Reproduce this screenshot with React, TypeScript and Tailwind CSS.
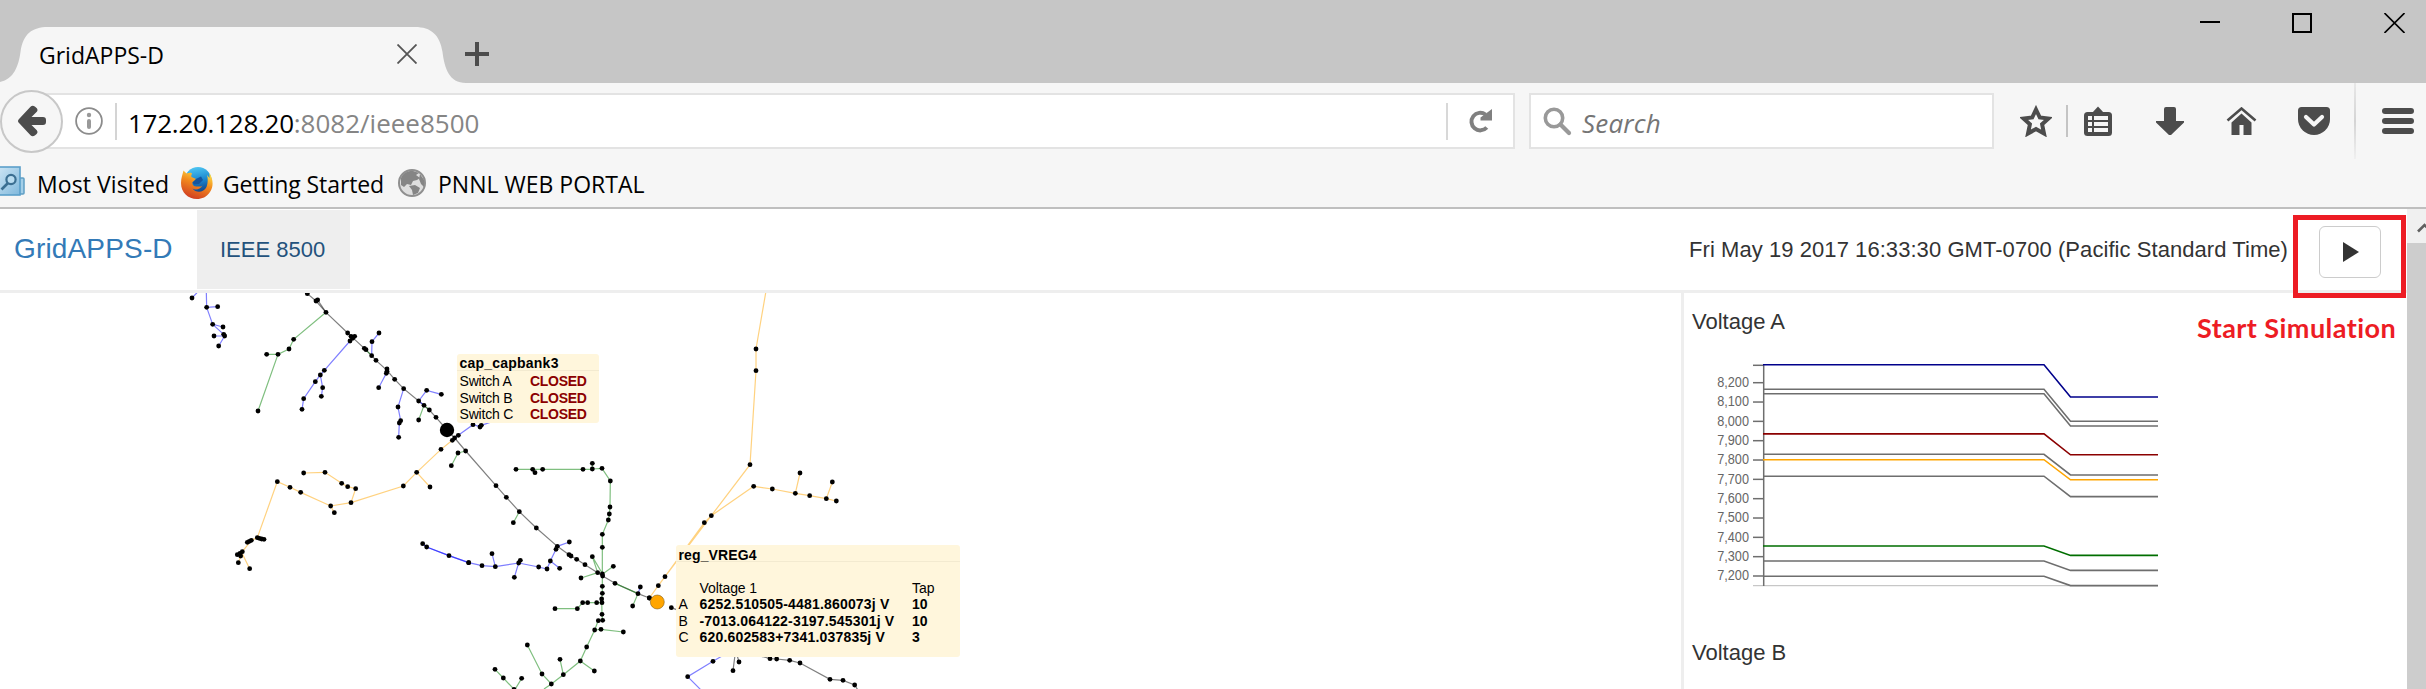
import React from "react";

type Dot = [number, number];
type Section = { ox: number; oy: number; lines: [string, string][]; dots: Dot[] };

const BLUE = "#0000ff";
const GREEN = "#008000";
const BLACK = "#000000";
const ORANGE = "#ffa500";

// Feeder geometry, in thirds of a pixel from each section's origin.
const sections: Section[] = [
  {
    ox: 180,
    oy: -8,
    lines: [
      [BLUE, "M52 22L36 39M79 22L80 67L113 65M80 67L98 118L129 126M98 118L131 148M134 153H102M134 153L116 183"],
      [BLACK, "M372 18L382 26L408 48L438 82L503 144L518 158L553 190L575 212L588 226L621 256L644 283L671 311L716 348L748 375L768 397L801 435L824 459L857 498L948 602"],
      [BLACK, "M413 45L438 82"],
      [GREEN, "M438 82L341 163L327 192L294 208L234 378M260 208H294L327 192M553 190L575 212M732 361L716 405M732 361L748 375M857 498L834 504L814 542"],
      [BLUE, "M510 168L433 256L421 270L406 290L371 341L366 373M421 270L428 308L424 334M597 144L576 170L575 212M619 265L596 308M671 311L654 366L662 407L658 414L656 457M716 348L740 316L784 328M716 348L740 316M716 348L732 361M824 459L835 451L879 419L900 425M904 421L945 407"],
      [ORANGE, "M817 466L783 493L710 562L670 603L513 653L452 663L362 622L330 607L292 590L232 758L214 766L202 772M710 562L750 606M371 564L435 562L485 595L503 605L527 611L513 653M452 663L463 683M208 774L187 800L175 833M187 806L209 851"],
      [BLUE, "M728 776L740 786L807 812L866 833"],
    ],
    dots: [
      [36, 39], [80, 67], [113, 65], [98, 118], [129, 126], [102, 153], [131, 148], [134, 153], [116, 183],
      [382, 26], [408, 48], [413, 45], [438, 82], [341, 163], [327, 192], [260, 208], [294, 208], [234, 378],
      [503, 144], [513, 154], [524, 154], [518, 160], [510, 168], [597, 144], [576, 170], [553, 190], [558, 194],
      [575, 212], [588, 226], [433, 256], [421, 270], [406, 290], [428, 308], [424, 334], [371, 341], [366, 373],
      [621, 252], [621, 259], [619, 265], [596, 308], [644, 283], [671, 311], [654, 366], [662, 407], [658, 414],
      [656, 457], [740, 316], [784, 328], [716, 348], [732, 361], [748, 375], [716, 405], [768, 397], [879, 419],
      [900, 426], [904, 421], [835, 451], [824, 459], [817, 466], [783, 493], [834, 504], [857, 498], [814, 542],
      [710, 562], [670, 603], [750, 606], [371, 564], [435, 562], [485, 595], [503, 605], [527, 611], [513, 653],
      [452, 663], [463, 683], [292, 590], [330, 607], [362, 622], [232, 758], [238, 760], [245, 762], [252, 763],
      [202, 772], [208, 769], [214, 766], [187, 800], [172, 809], [182, 813], [180, 805], [175, 833], [209, 851],
      [728, 776], [740, 786], [807, 812], [866, 833],
    ],
  },
  {
    ox: 420,
    oy: 147,
    lines: [
      [BLACK, "M228 137L259 172L298 215L349 264L412 319L447 344L470 358L495 374L533 398L548 408L585 430L654 461L688 474L712 486M754 503L775 511"],
      [GREEN, "M298 215L280 248M288 88H338L345 98M338 88H517V70M517 87L546 85L571 123L570 201L568 222L565 240L547 283V439L547 460L545 477L546 523M546 488H488L472 506H405M533 398L517 350M548 402L517 350M548 402L580 379M533 398L483 414M585 430L654 461L638 498M546 523L548 541H535L524 570L500 621L481 663L430 704L394 732L366 702L322 615M524 570L543 568L610 576M481 663L523 693M430 704L420 658M430 704L394 732L372 747M225 688L250 714L284 750L305 715"],
      [BLUE, "M8 311L20 321L87 347L146 368L186 377L226 380L216 341M226 380L296 369L301 361M296 369L283 412M296 369L356 381L381 387L391 363L408 328L412 319L448 306M391 363L419 385M661 441L654 461"],
    ],
    dots: [
      [228, 137], [259, 172], [298, 215], [280, 248], [349, 264], [412, 319], [408, 328], [448, 306], [447, 344],
      [453, 348], [470, 358], [495, 374], [533, 398], [547, 402], [548, 408], [517, 350], [580, 379], [483, 414],
      [585, 430], [654, 461], [661, 441], [638, 498], [688, 474], [754, 503], [288, 88], [338, 88], [345, 98],
      [368, 88], [489, 88], [517, 70], [517, 87], [546, 85], [571, 123], [570, 201], [568, 222], [565, 240],
      [547, 283], [547, 322], [146, 368], [186, 377], [226, 380], [216, 341], [296, 369], [301, 361], [283, 412],
      [356, 381], [381, 387], [391, 363], [419, 385], [547, 439], [547, 460], [545, 477], [546, 488], [530, 488],
      [503, 488], [488, 488], [472, 506], [405, 506], [546, 523], [548, 541], [535, 542], [524, 570], [543, 568],
      [610, 576], [500, 621], [481, 663], [523, 693], [430, 704], [420, 658], [394, 732], [366, 702], [322, 615],
      [225, 688], [250, 714], [305, 715], [282, 748],
    ],
  },
  {
    ox: 640,
    oy: -8,
    lines: [
      [ORANGE, "M378 18L348 192V257L330 539L214 692L193 713L75 875L55 902L28 939M341 604L214 692L75 875M341 604L397 612L466 625L509 632L559 641L589 648M466 625L480 564M559 641L577 591"],
      [BLUE, "M250 1111L219 1129L143 1175L182 1214"],
      [BLACK, "M285 1110L279 1157M291 1110L297 1131M350 1110L390 1121L410 1122L449 1126L480 1134L570 1183L609 1186L644 1200L653 1214"],
    ],
    dots: [
      [348, 192], [348, 257], [330, 539], [341, 604], [397, 612], [466, 625], [480, 564], [509, 632], [559, 641],
      [577, 591], [589, 648], [214, 692], [193, 713], [75, 875], [55, 902], [28, 939], [219, 1129], [143, 1175],
      [297, 1131], [279, 1157], [390, 1121], [410, 1122], [449, 1126], [480, 1134], [570, 1183], [609, 1186],
      [644, 1200],
    ],
  },
];

const series: [string, number, number][] = [
  ["#6e6e6e", 389.2, 421.3],
  ["#6e6e6e", 393.7, 426],
  ["#6e6e6e", 454.3, 475],
  ["#6e6e6e", 476.2, 496.6],
  ["#6e6e6e", 561, 570.4],
  ["#6e6e6e", 576.3, 585.6],
  ["#00008b", 364.8, 397],
  ["#8b0000", 433.9, 454.8],
  ["#ffa500", 459.7, 479.8],
  ["#006e00", 546, 555.4],
];

const ticks = ["8,200", "8,100", "8,000", "7,900", "7,800", "7,700", "7,600", "7,500", "7,400", "7,300", "7,200"];

function TitleBar() {
  return (
    <div className="flex h-[83px] justify-between bg-[#c6c6c6]">
      <div className="relative flex w-[500px] shrink-0 items-center pt-[27px]">
        <svg className="absolute left-0 top-0" width="470" height="83" viewBox="0 0 470 83">
          <path d="M0 82C14 79 18.5 66 20.5 52C23 34 32 27 48 27H415C431 27 440 35 442.5 52C444.5 68 449 83 466 83H0Z" fill="#f6f6f6" />
        </svg>
        <span className="relative ml-[39px] w-[358px] text-[23px] leading-[56px] text-black">GridAPPS-D</span>
        <svg className="relative -mt-0.5 shrink-0" width="20" height="20" viewBox="0 0 20 20">
          <path d="M0.5 0.5L19.5 19.5M19.5 0.5L0.5 19.5" stroke="#555" strokeWidth="1.8" />
        </svg>
        <svg className="relative -mt-0.5 ml-12 shrink-0" width="24" height="24" viewBox="0 0 24 24">
          <path d="M12 0V24M0 12H24" stroke="#4c4c4c" strokeWidth="4" />
        </svg>
      </div>
      <div className="flex h-[46px] items-center gap-[72px] pr-[21px]">
        <svg width="20" height="20" viewBox="0 0 20 20"><path d="M0 9H20" stroke="#000" strokeWidth="2" /></svg>
        <svg width="20" height="20" viewBox="0 0 20 20"><rect x="1" y="1" width="18" height="18" fill="none" stroke="#000" strokeWidth="2" /></svg>
        <svg width="21" height="20" viewBox="0 0 21 20"><path d="M0.5 0L20.5 20M20.5 0L0.5 20" stroke="#000" strokeWidth="1.6" /></svg>
      </div>
    </div>
  );
}

function Toolbar() {
  return (
    <div className="flex h-[76px] items-center">
      <div className="relative z-10 -mr-8 flex size-[63px] shrink-0 items-center justify-center rounded-full border-2 border-[#c8c8c8] bg-[#f6f6f6]">
        <svg width="28" height="32" viewBox="0 0 28 32">
          <path d="M0.8 14.2L12.5 1.8Q14.5 -0.2 16.8 1.5L18.6 3Q20.3 4.8 18.8 6.8L13.5 12H25Q28 12 28 15V17Q28 20 25 20H13.5L18.8 25.2Q20.3 27.200 18.600 29L16.8 30.500Q14.500 32.200 12.5 30.200L0.8 17.800Q-0.800 16 0.800 14.200Z" fill="#4c4c4c" />
        </svg>
      </div>
      <div className="flex h-14 w-[1484px] shrink-0 items-center border-2 border-[#e3e3e3] bg-white pl-[42px]">
        <svg className="shrink-0" width="28" height="28" viewBox="0 0 28 28">
          <circle cx="14" cy="14" r="12.9" fill="none" stroke="#8c8c8c" strokeWidth="1.8" />
          <circle cx="14" cy="8" r="2.2" fill="#999" />
          <rect x="12" y="12" width="4" height="10" rx="2" fill="#999" />
        </svg>
        <div className="ml-3 h-[37px] w-0.5 shrink-0 bg-[#d4d4d4]" />
        <div className="ml-[11px] grow whitespace-nowrap pt-[3px] text-[26px] leading-[50px]">
          <span className="tracking-[-0.26px] text-black">172.20.128.20</span>
          <span className="text-[#858585]">:8082/ieee8500</span>
        </div>
        <div className="h-[37px] w-0.5 bg-[#d8d8d8]" />
        <svg className="mx-[21px] shrink-0" width="23" height="24" viewBox="0 0 23 24">
          <path d="M17.8 18.5A8.8 8.8 0 1 1 16.5 5.5" fill="none" stroke="#808080" strokeWidth="4" />
          <path d="M23 0V11.5H11.5V8.5Z" fill="#808080" />
        </svg>
      </div>
      <div className="ml-[14px] flex h-14 w-[465px] shrink-0 items-center border-2 border-[#e3e3e3] bg-white pl-3">
        <svg className="shrink-0" width="29" height="29" viewBox="0 0 29 29">
          <circle cx="11" cy="11" r="8.7" fill="none" stroke="#999" strokeWidth="3.6" />
          <path d="M17.5 17.5L26 26" stroke="#999" strokeWidth="4.2" strokeLinecap="round" />
        </svg>
        <span className="ml-2.5 pt-[3px] text-[26px] italic leading-[50px] tracking-[0.2px] text-[#757575]">Search</span>
      </div>
      <svg className="ml-[26px] shrink-0" width="32" height="32" viewBox="0 0 32 32">
        <path d="M16 4.5L19.8 12.5L28.5 13.5L22.1 19.3L24 28.5L16 24L8 28.5L9.9 19.3L3.5 13.5L12.2 12.5Z" fill="none" stroke="#4c4c4c" strokeWidth="4" />
      </svg>
      <div className="ml-[14px] h-8 w-0.5 shrink-0 bg-[#c4c4c4]" />
      <svg className="ml-4 shrink-0" width="28" height="30" viewBox="0 0 28 30">
        <path d="M8 7L14 0.5L20 7Z" fill="#4c4c4c" />
        <rect y="6" width="28" height="24" rx="3.5" fill="#4c4c4c" />
        <path d="M10 12H24M10 18H24M10 24H24" stroke="#f6f6f6" strokeWidth="4" />
        <path d="M4 12H8M4 18H8M4 24H8" stroke="#f6f6f6" strokeWidth="4" />
      </svg>
      <svg className="ml-11 shrink-0" width="28" height="28" viewBox="0 0 28 28">
        <path d="M8 2Q8 0 10 0H18Q20 0 20 2V14H28V15.5L15 28H13L0 15.5V14H8Z" fill="#4c4c4c" />
      </svg>
      <svg className="ml-[42px] shrink-0" width="31" height="28" viewBox="0 0 31 28">
        <path d="M1.5 13.5L15.5 1.5L29.5 13.5" fill="none" stroke="#4c4c4c" strokeWidth="2.6" />
        <path d="M15.5 6.5L25.5 15.5V28H17.5V18H13.5V28H5.5V15.5Z" fill="#4c4c4c" />
      </svg>
      <svg className="ml-[41px] shrink-0" width="32" height="28" viewBox="0 0 32 28">
        <path d="M3.5 0H28.5Q32 0 32 3.5V12A16 16 0 0 1 0 12V3.5Q0 0 3.5 0Z" fill="#4c4c4c" />
        <path d="M8 10L16 17.5L24 10" fill="none" stroke="#f6f6f6" strokeWidth="4.2" strokeLinecap="round" strokeLinejoin="round" />
      </svg>
      <div className="ml-6 h-[76px] w-0.5 shrink-0 bg-linear-to-b from-[#e8e8e8] via-[#d4d4d4] to-[#f0f0f0]" />
      <svg className="ml-[26px] shrink-0" width="32" height="26" viewBox="0 0 32 26">
        <rect width="32" height="6" rx="3" fill="#4c4c4c" />
        <rect y="10" width="32" height="6" rx="3" fill="#4c4c4c" />
        <rect y="20" width="32" height="6" rx="3" fill="#4c4c4c" />
      </svg>
    </div>
  );
}

function Bookmarks() {
  return (
    <div className="flex h-12 items-center whitespace-nowrap pt-[3px] text-[23px] leading-[45px] text-black">
      <svg className="-mt-1.5 shrink-0" width="25" height="31" viewBox="0 0 25 31">
        <defs>
          <linearGradient id="book" x1="0" y1="0" x2="1" y2="1">
            <stop offset="0" stopColor="#cfe6f5" />
            <stop offset="1" stopColor="#7fb8dc" />
          </linearGradient>
        </defs>
        <rect x="12" y="12" width="12" height="16" rx="1" fill="#a4cfe8" stroke="#5f9fc4" strokeWidth="1.5" />
        <rect x="-3" y="1" width="23" height="28" fill="url(#book)" stroke="#5b9fca" strokeWidth="1.6" />
        <circle cx="11" cy="13.5" r="4.6" fill="#b9dcf0" stroke="#3b6f92" strokeWidth="2.2" />
        <path d="M8 17L1.5 23.5" stroke="#3b6f92" strokeWidth="2.6" />
      </svg>
      <span className="ml-3 w-36 tracking-[0.08px]">Most Visited</span>
      <svg className="-mt-[3px] shrink-0" width="32" height="32" viewBox="0 0 32 32">
        <defs>
          <linearGradient id="fox" x1="0.7" y1="0" x2="0.3" y2="1">
            <stop offset="0" stopColor="#ffe84a" />
            <stop offset="0.45" stopColor="#f28a1d" />
            <stop offset="1" stopColor="#cf3a22" />
          </linearGradient>
          <linearGradient id="sky" x1="0.4" y1="0" x2="0.6" y2="1">
            <stop offset="0" stopColor="#4fc6f2" />
            <stop offset="0.5" stopColor="#1a86cf" />
            <stop offset="1" stopColor="#123a7d" />
          </linearGradient>
        </defs>
        <circle cx="17" cy="13.5" r="13.5" fill="url(#sky)" />
        <path d="M28.5 6C32 12 33 19 29 25C25.5 30 21 32 16 32C7 32 0 25.5 0 16C0 11 1.5 7.5 2.5 3.5L5.5 6.5C8 5.5 10.5 5.5 11 6.5C10.5 8 10 8.5 10.5 10C12 11 14 11 15 12C14.5 13.5 12.5 14 11.5 15.5C11 17.5 12.5 19.5 15.5 19.5C18 19.5 20 20 21.5 18.5C19 23 14 23 11.5 21.5C15 26.5 23 25.5 25.5 20C27 16 27 11 26 8L28.5 11Z" fill="url(#fox)" />
        <path d="M15 12L20 9.5L22 13L18 17L13 17.5L11.5 15.5Z" fill="#15559f" />
      </svg>
      <span className="ml-2.5 w-[175px] tracking-[-0.1px]">Getting Started</span>
      <svg className="-mt-[3px] shrink-0" width="28" height="28" viewBox="0 0 28 28">
        <circle cx="14" cy="14" r="13" fill="#dedede" stroke="#8f8f8f" strokeWidth="2" />
        <path d="M3 9C5 4 10 1.5 15 2L21 4L18 6L22 9L19 11L15 12L13 16L9 15L6 18L3 16Z" fill="#858585" />
        <path d="M11 17L17 16L22 19L20 24L15 26L14 21Z" fill="#858585" />
        <path d="M22 5L26 11V18L23 15L21 10Z" fill="#858585" />
      </svg>
      <span className="ml-3">PNNL WEB PORTAL</span>
    </div>
  );
}

function AppHeader() {
  return (
    <div className="flex h-[84px] items-start border-b-[3px] border-[#eee] font-['Liberation_Sans',sans-serif]">
      <span className="w-[197px] pl-3.5 text-[28px] leading-[80px] tracking-[0.16px] text-[#337ab7]">GridAPPS-D</span>
      <span className="mt-px h-[79px] w-[153px] bg-[#eee] pl-[23px] text-[22px] leading-[79px] text-[#23527c]">IEEE 8500</span>
      <span className="ml-auto mr-[31px] whitespace-nowrap text-[22px] leading-[81px] tracking-[0.06px] text-[#333]">
        Fri May 19 2017 16:33:30 GMT-0700 (Pacific Standard Time)
      </span>
      <button className="mr-[26px] mt-[17px] flex h-[52px] w-[62px] items-center justify-center rounded-md border border-[#ccc] bg-white">
        <svg className="-mr-px" width="16" height="20" viewBox="0 0 16 20"><path d="M0 0L16 10L0 20Z" fill="#333" /></svg>
      </button>
    </div>
  );
}

function CapTooltip() {
  return (
    <div className="absolute left-[457px] top-[61px] h-[69px] w-[142px] rounded-[3px] bg-[#fff6dc] text-[14px] leading-[16px] text-black">
      <div className="h-[17px] border-b border-[#f3ead0] pl-[2.5px] pt-px font-bold tracking-[0.22px]">cap_capbank3</div>
      <div className="pt-0.5">
        {["A", "B", "C"].map((p) => (
          <div key={p} className="flex pl-[2.5px] leading-[16.5px]">
            <span className="w-[70.5px] tracking-[-0.2px]">Switch {p}</span>
            <span className="font-bold tracking-[-0.3px] text-[#8b0000]">CLOSED</span>
          </div>
        ))}
      </div>
    </div>
  );
}

const taps: [string, string, string][] = [
  ["A", "6252.510505-4481.860073j V", "10"],
  ["B", "-7013.064122-3197.545301j V", "10"],
  ["C", "620.602583+7341.037835j V", "3"],
];

function RegTooltip() {
  return (
    <div className="absolute left-[676px] top-[252px] h-[112px] w-[284px] rounded-[3px] bg-[#fff6dc] text-[14px] text-black">
      <div className="h-[17px] border-b border-[#f3ead0] pl-[2.5px] pt-0.5 font-bold leading-[16px] tracking-[0.12px]">reg_VREG4</div>
      <div className="mt-[18px] grid grid-cols-[21px_212.5px_1fr] pl-[2.5px] leading-[16.3px]">
        <span />
        <span className="tracking-[-0.1px]">Voltage 1</span>
        <span>Tap</span>
        {taps.map(([phase, v, tap]) => (
          <React.Fragment key={phase}>
            <span>{phase}</span>
            <span className="whitespace-nowrap font-bold tracking-[0.18px]">{v}</span>
            <span className="font-bold">{tap}</span>
          </React.Fragment>
        ))}
      </div>
    </div>
  );
}

function Network() {
  return (
    <div className="relative h-[396px] w-[1681px] shrink-0 overflow-hidden">
      <svg className="block" width="1681" height="396" viewBox="0 0 1681 396">
        {sections.map((s, i) => (
          <g key={i} transform={`translate(${s.ox} ${s.oy}) scale(0.33333)`}>
            {s.lines.map(([color, d], j) => (
              <path key={j} d={d} fill="none" stroke={color} strokeOpacity="0.5" strokeWidth="3.6" />
            ))}
          </g>
        ))}
        {sections.map((s, i) => (
          <g key={i} transform={`translate(${s.ox} ${s.oy}) scale(0.33333)`}>
            {s.dots.map(([x, y], j) => (
              <circle key={j} cx={x} cy={y} r="7.2" fill="#000" />
            ))}
          </g>
        ))}
        <circle cx="447" cy="137" r="7.2" fill="#000" />
        <circle cx="657.3" cy="309" r="7" fill="#ffa500" stroke="#6b4a10" strokeWidth="0.5" />
      </svg>
      <CapTooltip />
      <RegTooltip />
    </div>
  );
}

function VoltagePanel() {
  return (
    <div className="h-[396px] w-[726px] shrink-0 overflow-hidden border-l-[3px] border-[#eee] pt-[7px]">
      <h4 className="h-[43px] pl-2 text-[22px] leading-[43px] text-[#333]">Voltage A</h4>
      <svg className="block" width="723" height="288" viewBox="1684 343 723 288">
        <path d="M1753 585.7H2158" stroke="#bbb" strokeWidth="1" />
        <path d="M1763.7 364.5V586" stroke="#6e6e6e" strokeWidth="1.5" />
        <path d="M1753 365.3H1763.7" stroke="#6e6e6e" strokeWidth="1.5" />
        {ticks.map((t, i) => (
          <g key={t}>
            <path d={`M1753 ${382.7 + i * 19.33}H1763.7`} stroke="#6e6e6e" strokeWidth="1.5" />
            <text x="1717.2" y={387 + i * 19.33} fontSize="14" textLength="31.8" lengthAdjust="spacingAndGlyphs" fill="#666">
              {t}
            </text>
          </g>
        ))}
        {series.map(([color, a, b]) => (
          <path key={a} d={`M1763 ${a}H2044L2070.5 ${b}H2158`} fill="none" stroke={color} strokeWidth="1.6" />
        ))}
      </svg>
      <h4 className="h-11 pl-2 text-[22px] leading-[44px] text-[#333]">Voltage B</h4>
    </div>
  );
}

export default function App() {
  return (
    <div className="relative h-[689px] w-[2426px] overflow-hidden bg-white font-['Open_Sans',sans-serif]">
      <TitleBar />
      <div className="h-[126px] border-b-2 border-[#bfbfbf] bg-[#f6f6f6]">
        <Toolbar />
        <Bookmarks />
      </div>
      <div className="flex h-[480px]">
        <div className="w-[2407px] shrink-0">
          <AppHeader />
          <div className="flex font-['Liberation_Sans',sans-serif]">
            <Network />
            <VoltagePanel />
          </div>
        </div>
        <div className="flex w-[19px] shrink-0 flex-col overflow-hidden bg-[#f0f0f0]">
          <svg className="h-[34px] shrink-0" width="19" height="34" viewBox="0 0 19 34">
            <path d="M11 22.5L17.5 16L24 22.5" fill="none" stroke="#606060" strokeWidth="2.6" />
          </svg>
          <div className="grow bg-[#cdcdcd]" />
        </div>
      </div>
      <div className="absolute left-[2293px] top-[215px] h-[83px] w-[113px] border-5 border-[#ed1c24]" />
      <div className="absolute left-[2197px] top-[308px] whitespace-nowrap font-['Lato',sans-serif] text-[27px] font-bold leading-[40px] tracking-[0.45px] text-[#ed1c24]">
        Start Simulation
      </div>
    </div>
  );
}
